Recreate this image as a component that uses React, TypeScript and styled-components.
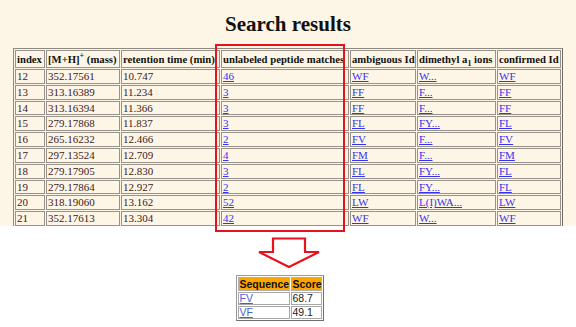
import styled, { createGlobalStyle } from 'styled-components'

const GlobalStyle = createGlobalStyle`
  html, body {
    margin: 0;
    padding: 0;
    background: #ffffff;
  }
  body {
    width: 576px;
    height: 327px;
    overflow: hidden;
  }
`

interface ResultRow {
  index: number
  mass: string
  time: string
  matches: string
  ambiguous: string
  dimethyl: string
  confirmed: string
}

const rows: ResultRow[] = [
  { index: 12, mass: '352.17561', time: '10.747', matches: '46', ambiguous: 'WF', dimethyl: 'W...', confirmed: 'WF' },
  { index: 13, mass: '313.16389', time: '11.234', matches: '3', ambiguous: 'FF', dimethyl: 'F...', confirmed: 'FF' },
  { index: 14, mass: '313.16394', time: '11.366', matches: '3', ambiguous: 'FF', dimethyl: 'F...', confirmed: 'FF' },
  { index: 15, mass: '279.17868', time: '11.837', matches: '3', ambiguous: 'FL', dimethyl: 'FY...', confirmed: 'FL' },
  { index: 16, mass: '265.16232', time: '12.466', matches: '2', ambiguous: 'FV', dimethyl: 'F...', confirmed: 'FV' },
  { index: 17, mass: '297.13524', time: '12.709', matches: '4', ambiguous: 'FM', dimethyl: 'F...', confirmed: 'FM' },
  { index: 18, mass: '279.17905', time: '12.830', matches: '3', ambiguous: 'FL', dimethyl: 'FY...', confirmed: 'FL' },
  { index: 19, mass: '279.17864', time: '12.927', matches: '2', ambiguous: 'FL', dimethyl: 'FY...', confirmed: 'FL' },
  { index: 20, mass: '318.19060', time: '13.162', matches: '52', ambiguous: 'LW', dimethyl: 'L(I)WA...', confirmed: 'LW' },
  { index: 21, mass: '352.17613', time: '13.304', matches: '42', ambiguous: 'WF', dimethyl: 'W...', confirmed: 'WF' },
]

const columnWidths = [30, 74, 99, 128, 66, 79, 64]

const scores = [
  { seq: 'FV', score: '68.7' },
  { seq: 'VF', score: '49.1' },
]

const Page = styled.div`
  position: relative;
  width: 576px;
  height: 327px;
  font-family: 'Liberation Serif', 'Times New Roman', serif;
`

const WebCapture = styled.section`
  height: 226px;
  overflow: hidden;
  background: #fdf5e6;
  padding-top: 12px;
  box-sizing: border-box;
`

const Title = styled.h1`
  margin: 0 0 11px;
  text-align: center;
  font-size: 21px;
  line-height: 25px;
  font-weight: bold;
  color: #111;
`

const ResultsTable = styled.table`
  margin-left: 13px;
  width: 540px;
  table-layout: fixed;
  border-collapse: separate;
  border-spacing: 1px;
  border: 1px solid #8e8a82;
  border-right-color: #6f6b64;
  border-bottom-color: #6f6b64;
  background: #fdf5e6;
`

const Col = styled.col<{ $w: number }>`
  width: ${({ $w }) => $w}px;
`

const HeadCell = styled.th`
  border: 1px solid #97938b;
  padding: 0 1px;
  font-size: 10.7px;
  line-height: 16px;
  font-weight: bold;
  text-align: left;
  white-space: nowrap;
  overflow: hidden;
  color: #111;

  sup, sub {
    font-size: 8px;
    line-height: 0;
  }
`

const Cell = styled.td`
  border: 1px solid #97938b;
  padding: 0 1px;
  font-size: 11px;
  line-height: 12.8px;
  color: #3b1c24;
  white-space: nowrap;
  overflow: hidden;
`

const Link = styled.a`
  color: #3434f0;
  text-decoration: underline;
  cursor: pointer;
`

const Highlight = styled.div`
  position: absolute;
  left: 215px;
  top: 44px;
  width: 130px;
  height: 188px;
  border: 2px solid #e8121c;
  box-sizing: border-box;
  pointer-events: none;
`

const Annotation = styled.section`
  display: flex;
  flex-direction: column;
  align-items: center;
`

const ArrowIcon = styled.svg`
  display: block;
  margin-top: 11px;
  margin-left: 2px;
`

const ScoreTable = styled.table`
  margin-top: 6px;
  margin-right: 17px;
  width: 85px;
  table-layout: fixed;
  border-collapse: separate;
  border-spacing: 1px;
  border: 1px solid #9a9a9a;
  border-right-color: #707070;
  border-bottom-color: #707070;
  font-family: 'Liberation Sans', Arial, sans-serif;
`

const ScoreHead = styled.th`
  background: #ffa500;
  border: 1px solid #b0b0b0;
  padding: 0 1px;
  font-size: 10.5px;
  line-height: 12px;
  font-weight: bold;
  text-align: left;
  color: #111;
  white-space: nowrap;
`

const ScoreCell = styled.td`
  background: #ffffff;
  border: 1px solid #a8a8a8;
  padding: 0 1px;
  font-size: 10.5px;
  line-height: 11px;
  color: #222;
`

const ScoreLink = styled.a`
  color: #4a5fd0;
  text-decoration: underline;
`

const DownArrow = () => (
  <ArrowIcon width="66" height="32" viewBox="0 0 66 32" aria-hidden="true">
    <polygon
      points="17,1.5 49,1.5 49,15 63,15 33,30 3,15 17,15"
      fill="#ffffff"
      stroke="#e8121c"
      strokeWidth="2.2"
      strokeLinejoin="miter"
    />
  </ArrowIcon>
)

const App = () => (
  <Page>
    <GlobalStyle />
    <WebCapture>
      <Title>Search results</Title>
      <ResultsTable>
        <colgroup>
          {columnWidths.map((w, i) => (
            <Col key={i} $w={w} />
          ))}
        </colgroup>
        <thead>
          <tr>
            <HeadCell>index</HeadCell>
            <HeadCell>
              [M+H]<sup>+</sup> (mass)
            </HeadCell>
            <HeadCell>retention time (min)</HeadCell>
            <HeadCell>unlabeled peptide matches</HeadCell>
            <HeadCell>ambiguous Id</HeadCell>
            <HeadCell>
              dimethyl a<sub>1</sub> ions
            </HeadCell>
            <HeadCell>confirmed Id</HeadCell>
          </tr>
        </thead>
        <tbody>
          {rows.map((r) => (
            <tr key={r.index}>
              <Cell>{r.index}</Cell>
              <Cell>{r.mass}</Cell>
              <Cell>{r.time}</Cell>
              <Cell>
                <Link>{r.matches}</Link>
              </Cell>
              <Cell>
                <Link>{r.ambiguous}</Link>
              </Cell>
              <Cell>
                <Link>{r.dimethyl}</Link>
              </Cell>
              <Cell>
                <Link>{r.confirmed}</Link>
              </Cell>
            </tr>
          ))}
        </tbody>
      </ResultsTable>
    </WebCapture>
    <Annotation>
      <DownArrow />
      <ScoreTable>
        <colgroup>
          <Col $w={52} />
          <Col $w={31} />
        </colgroup>
        <thead>
          <tr>
            <ScoreHead>Sequence</ScoreHead>
            <ScoreHead>Score</ScoreHead>
          </tr>
        </thead>
        <tbody>
          {scores.map((s) => (
            <tr key={s.seq}>
              <ScoreCell>
                <ScoreLink>{s.seq}</ScoreLink>
              </ScoreCell>
              <ScoreCell>{s.score}</ScoreCell>
            </tr>
          ))}
        </tbody>
      </ScoreTable>
    </Annotation>
    <Highlight />
  </Page>
)

export default App
